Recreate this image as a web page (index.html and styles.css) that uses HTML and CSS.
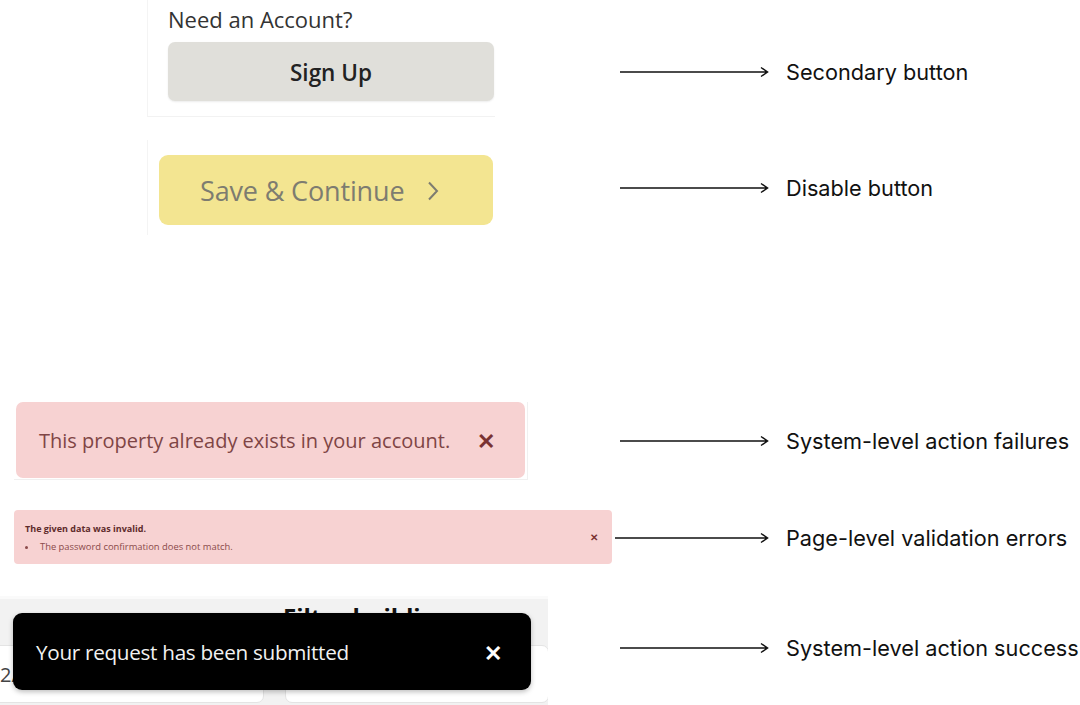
FILE: index.html
```html
<!DOCTYPE html>
<html lang="en">
<head>
    <meta charset="UTF-8">
    <title>Button and alert states</title>
    <link rel="stylesheet" href="styles.css">
</head>
<body>

<div class="row row-signup">
    <div class="sample">
        <div class="shot shot-signup">
            <div class="shot-label">Need an Account?</div>
            <button class="btn btn-secondary">Sign Up</button>
        </div>
    </div>
    <div class="note note-low">
        <svg class="arrow" width="150" height="12" viewBox="0 0 150 12"><path d="M0 6H147M141 1.5L147.5 6L141 10.5" fill="none" stroke="#111" stroke-width="1.5"/></svg>
        <span>Secondary button</span>
    </div>
</div>

<div class="row row-save">
    <div class="sample">
        <div class="shot shot-save">
            <button class="btn btn-disabled" disabled>
                <span>Save &amp; Continue</span>
                <svg class="chev" width="12" height="20" viewBox="0 0 12 20"><path d="M2 1.5L10 10L2 18.5" fill="none" stroke="#7d7c70" stroke-width="2"/></svg>
            </button>
        </div>
    </div>
    <div class="note">
        <svg class="arrow" width="150" height="12" viewBox="0 0 150 12"><path d="M0 6H147M141 1.5L147.5 6L141 10.5" fill="none" stroke="#111" stroke-width="1.5"/></svg>
        <span>Disable button</span>
    </div>
</div>

<div class="row row-fail">
    <div class="sample">
        <div class="shot shot-fail">
            <div class="alert alert-big">
                <span>This property already exists in your account.</span>
                <span class="close">&#x2715;</span>
            </div>
        </div>
    </div>
    <div class="note">
        <svg class="arrow" width="150" height="12" viewBox="0 0 150 12"><path d="M0 6H147M141 1.5L147.5 6L141 10.5" fill="none" stroke="#111" stroke-width="1.5"/></svg>
        <span>System-level action failures</span>
    </div>
</div>

<div class="row row-invalid">
    <div class="sample">
        <div class="alert alert-small">
            <div class="alert-body">
                <div class="alert-title">The given data was invalid.</div>
                <ul>
                    <li>The password confirmation does not match.</li>
                </ul>
            </div>
            <span class="close">&#x2715;</span>
        </div>
    </div>
    <div class="note note-wide">
        <svg class="arrow" width="155" height="12" viewBox="0 0 155 12"><path d="M0 6H152M146 1.5L152.5 6L146 10.5" fill="none" stroke="#111" stroke-width="1.5"/></svg>
        <span>Page-level validation errors</span>
    </div>
</div>

<div class="row row-toast">
    <div class="sample">
        <div class="shot shot-toast">
            <div class="backdrop-title">Filter buildings</div>
            <div class="backdrop-fields">
                <div class="field"><span class="field-text">2/</span></div>
                <div class="field"></div>
            </div>
            <div class="toast">
                <span>Your request has been submitted</span>
                <span class="close">&#x2715;</span>
            </div>
        </div>
    </div>
    <div class="note note-high">
        <svg class="arrow" width="150" height="12" viewBox="0 0 150 12"><path d="M0 6H147M141 1.5L147.5 6L141 10.5" fill="none" stroke="#111" stroke-width="1.5"/></svg>
        <span>System-level action success</span>
    </div>
</div>

</body>
</html>
```

FILE: styles.css
```css
body {
    margin: 0;
    width: 1080px;
    height: 705px;
    overflow: hidden;
    background: #fff;
    font-family: "Open Sans", "Noto Sans", sans-serif;
}
.row {
    display: flex;
    align-items: center;
}
.sample {
    width: 620px;
    flex-shrink: 0;
    align-self: stretch;
}
.note {
    display: flex;
    align-items: center;
    font-family: Inter, sans-serif;
    font-size: 21.7px;
    color: #111;
}
.note .arrow {
    display: block;
    margin-right: 16px;
}
.note-low {
    margin-top: 26px;
}
.note-high {
    margin-bottom: 6px;
}
.note-wide {
    margin-left: -5px;
}

/* sign up */
.row-signup {
    height: 117px;
}
.shot {
    box-sizing: border-box;
    height: 100%;
}
.shot-signup {
    margin-left: 147px;
    width: 348px;
    border-left: 1px solid #f4f4f4;
    border-bottom: 1px solid #f2f2f2;
    padding: 4px 0 0 20px;
}
.shot-label {
    font-size: 22px;
    line-height: 30px;
    color: #333;
}
.btn {
    display: block;
    border: none;
    font-family: "Open Sans", "Noto Sans", sans-serif;
}
.btn-secondary {
    margin-top: 8px;
    width: 326px;
    height: 59px;
    border-radius: 7px;
    background: #e0dfda;
    box-shadow: 0 1px 2px rgba(0, 0, 0, 0.08);
    font-size: 22.5px;
    font-weight: 600;
    color: #222;
    padding-top: 2px;
}

/* disabled */
.row-save {
    height: 95px;
    margin-top: 23px;
}
.shot-save {
    margin-left: 147px;
    width: 348px;
    border-left: 1px solid #f4f4f4;
    padding: 15px 0 0 11px;
}
.btn-disabled {
    display: flex;
    align-items: center;
    width: 334px;
    height: 70px;
    border-radius: 9px;
    background: #f3e591;
    font-size: 27px;
    color: #7d7c70;
    padding: 1px 0 0 41px;
    letter-spacing: -0.15px;
}
.chev {
    display: block;
    margin-left: 23px;
    margin-top: 1px;
}

/* failure alert */
.row-fail {
    height: 78px;
    margin-top: 167px;
}
.shot-fail {
    margin-left: 14px;
    width: 514px;
    border-right: 1px solid #f0f0f0;
    border-bottom: 1px solid #f0f0f0;
    padding: 0 0 2px 2px;
}
.alert {
    box-sizing: border-box;
    display: flex;
    align-items: center;
    justify-content: space-between;
    background: #f7d2d2;
    color: #7f4545;
}
.alert-big {
    height: 76px;
    width: 509px;
    border-radius: 7px;
    padding: 0 30px 0 23px;
    font-size: 20px;
}
.alert .close {
    font-weight: 700;
    color: #7a3232;
}
.alert-big .close {
    font-size: 22px;
}

/* validation alert */
.row-invalid {
    height: 56px;
    margin-top: 30px;
}
.alert-small {
    margin-left: 14px;
    width: 598px;
    height: 54px;
    border-radius: 4px;
    padding: 0 14px 0 11px;
}
.alert-title {
    font-size: 9px;
    font-weight: 700;
    color: #5e2b2b;
}
.alert-small ul {
    margin: 5px 0 0;
    padding-left: 13px;
    font-size: 9.4px;
    color: #8a4a4a;
}
.alert-small li {
    padding-left: 2px;
}
.alert-small .close {
    font-size: 10px;
}

/* success toast */
.row-toast {
    height: 109px;
    margin-top: 30px;
}
.shot-toast {
    position: relative;
    width: 548px;
    background: #f2f2f2;
    border-top: 3px solid #fafafa;
    overflow: hidden;
}
.backdrop-title {
    margin: 1px 0 0 283px;
    font-size: 24px;
    font-weight: 700;
    color: #111;
}
.backdrop-fields {
    display: flex;
    gap: 21px;
    margin-top: 12px;
}
.field {
    flex-shrink: 0;
    width: 262px;
    height: 56px;
    background: #fff;
    border: 1px solid #e4e4e4;
    border-radius: 7px;
    display: flex;
    align-items: center;
}
.field:first-child {
    width: 270px;
    margin-left: -8px;
}
.field-text {
    font-size: 20px;
    color: #444;
    margin-left: 7px;
}
.toast {
    position: absolute;
    left: 13px;
    top: 14px;
    width: 518px;
    height: 77px;
    box-sizing: border-box;
    padding: 0 29px 0 23px;
    background: #000;
    border-radius: 9px;
    box-shadow: 0 2px 5px rgba(0, 0, 0, 0.25);
    display: flex;
    align-items: center;
    justify-content: space-between;
    color: #f2f2f2;
    font-size: 20.7px;
    letter-spacing: -0.3px;
}
.toast .close {
    font-size: 22px;
    font-weight: 700;
    color: #fff;
}
```
